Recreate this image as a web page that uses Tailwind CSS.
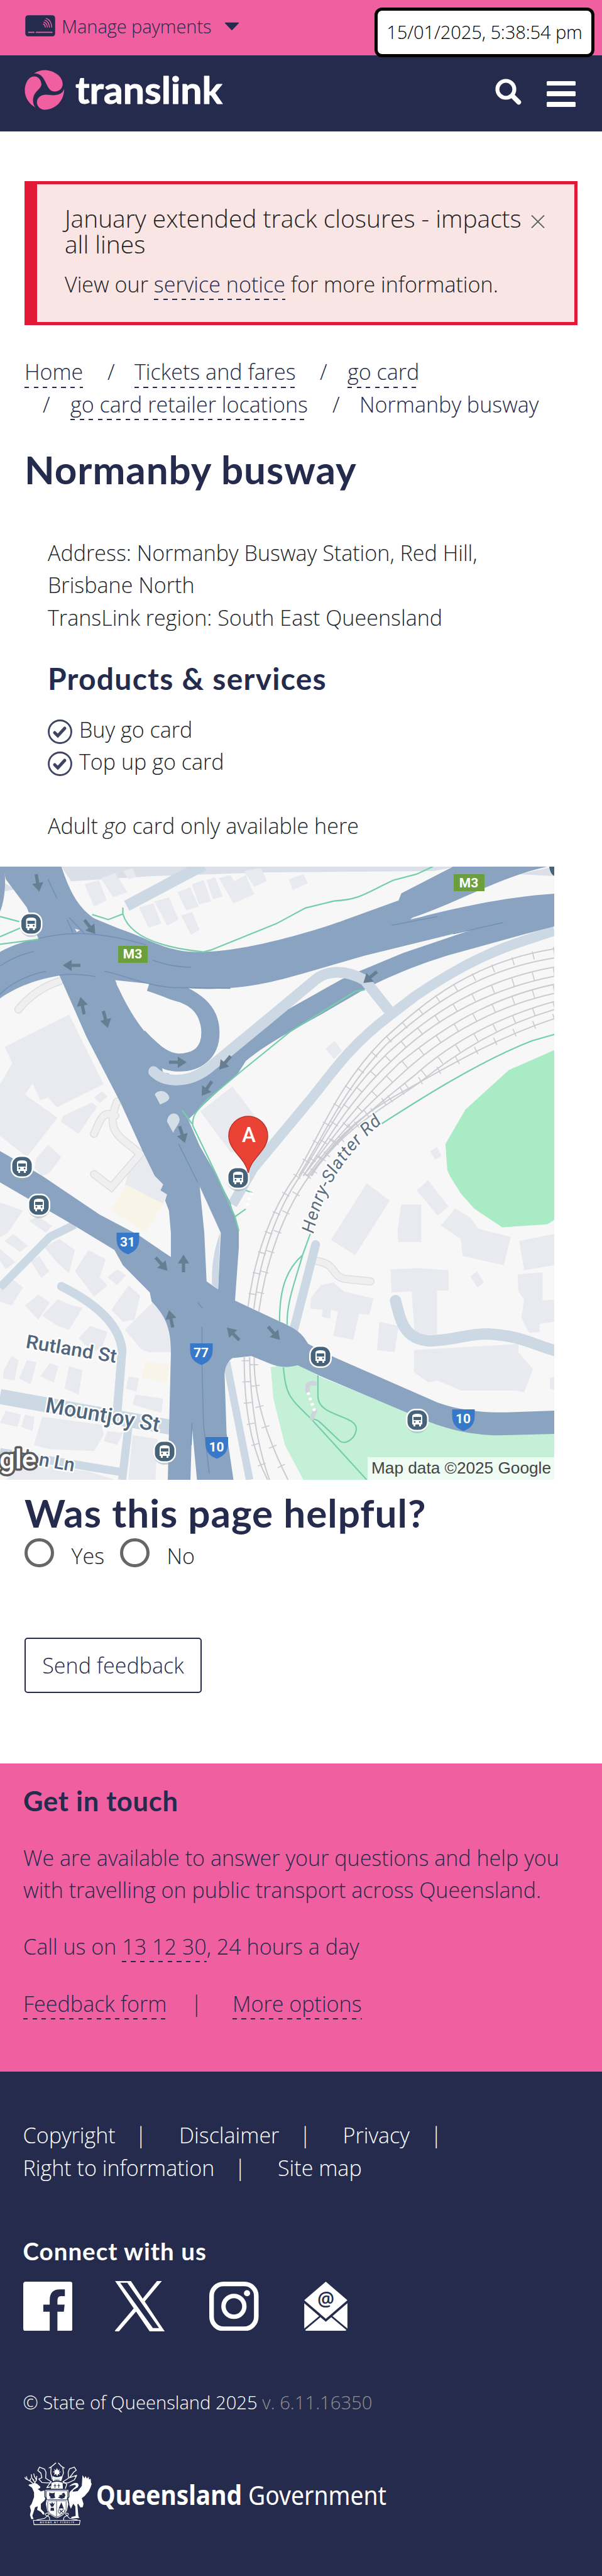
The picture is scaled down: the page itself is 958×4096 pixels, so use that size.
<!DOCTYPE html>
<html lang="en">
<head>
<meta charset="utf-8">
<title>Normanby busway | Translink</title>
<script src="https://cdn.jsdelivr.net/npm/@tailwindcss/browser@4"></script>
</head>
<body class="w-[958px] bg-white font-['Open_Sans','Noto_Sans',sans-serif] text-[34.1px] leading-[51.2px] font-light text-[#212529]">

<!-- Payments bar -->
<div class="flex h-[88px] items-start bg-[#f05fa0] pl-[40px] pr-[12px] text-[29.1px] text-[#252b4c]">
  <svg class="mt-[23.5px] h-[34px] w-[48px] shrink-0" viewBox="149 26 175 124">
    <rect x="150" y="27" width="173" height="122" rx="16" fill="#252b4c"/>
    <g fill="none" stroke="#f05fa0" stroke-width="5" stroke-linecap="round">
      <path stroke-width="6" d="M169,126 H201 M213,126 H306"/>
      <path d="M255,78 Q265,82 266,96"/><path d="M258,67 Q276,73 278,96"/><path d="M264,56 Q287,64 290,96"/><path d="M271,45 Q301,56 303,96"/>
    </g>
  </svg>
  <span class="mt-[20px] ml-[10px] leading-[44px] tracking-[-0.1px]">Manage payments</span>
  <svg class="mt-[33px] ml-[20px] h-[18px] w-[24px]" viewBox="1320 64 88 50"><path fill="#252b4c" stroke="#252b4c" stroke-width="6" stroke-linejoin="round" d="M1326,69 H1402 L1364,108Z"/></svg>
  <div class="relative z-10 mt-[12px] ml-auto flex h-[78.5px] w-[350px] shrink-0 items-center justify-center rounded-[12px] border-[5px] border-black bg-white pt-[1px] tracking-[-0.12px] whitespace-nowrap text-black">15/01/2025, 5:38:54 pm</div>
</div>

<!-- Main navigation -->
<header class="flex h-[121px] items-start bg-[#252b4c] pl-[38.5px] pr-[42px]">
  <svg class="mt-[22.5px] h-[64px] w-[64px] shrink-0" viewBox="142 348 236 236" fill="#f05fa0">
    <path d="M206,569 C165,545 144,510 144,468 C144,430 165,387 198,387 C225,387 241,410 241,435 C238,465 192,475 192,530 C192,548 198,560 206,569Z"/>
    <path d="M198,369 C220,355 240,350 262,350 C310,350 366,385 366,430 C366,458 345,475 320,475 C290,475 280,450 268,425 C252,390 235,368 198,369Z"/>
    <path d="M375,460 C375,530 325,582 260,582 C235,582 215,562 215,540 C215,510 240,494 270,494 C310,498 360,505 375,460Z"/>
  </svg>
  <svg class="mt-[22px] ml-[16px] h-[76px] w-[240px]" viewBox="0 0 240 76">
    <text x="1" y="54.5" textLength="234" lengthAdjust="spacingAndGlyphs" font-family="Lato, sans-serif" font-weight="700" font-size="58.5" fill="#fff" stroke="#fff" stroke-width="1" stroke-linejoin="round">translink</text>
  </svg>
  <svg class="mt-[37px] ml-auto h-[42px] w-[42px]" viewBox="0 0 42 42" fill="none" stroke="#fff" stroke-linecap="round">
    <circle cx="17" cy="17" r="13.5" stroke-width="6.2"/><path d="M28.5,28.5 L37.5,37.5" stroke-width="7.5"/>
  </svg>
  <div class="mt-[40.5px] ml-[40px] flex w-[46px] flex-col gap-[9px]">
    <div class="h-[7.8px] rounded-[1.5px] bg-white"></div>
    <div class="h-[7.8px] rounded-[1.5px] bg-white"></div>
    <div class="h-[7.8px] rounded-[1.5px] bg-white"></div>
  </div>
</header>

<main>
  <div class="px-[39px] pt-[78.6px]">
    <!-- Alert -->
    <div class="flex h-[229.2px] items-start border-[5px] border-l-[20px] border-[#e31836] bg-[#f9e5e3] pl-[44px] text-[#222]">
      <div class="w-[732px] pt-[33px]">
        <h2 class="text-[38.9px] leading-[41px]">January extended track closures - impacts<br>all lines</h2>
        <p class="pt-[19.4px]">View our <a class="bg-[repeating-linear-gradient(90deg,#252b4c_0_7.3px,transparent_7.3px_14.6px)] bg-[length:100%_2.4px] bg-bottom bg-no-repeat pb-[2.6px] text-[#252b4c]">service notice</a> for more information.</p>
      </div>
      <svg class="mt-[48px] ml-[9px] h-[24px] w-[24px]" viewBox="0 0 24 24" fill="none" stroke-width="2"><path stroke="#fff" d="M2,3.5 L22,23.5 M22,3.5 L2,23.5"/><path stroke="#6a6363" d="M2,1.5 L22,21.5 M22,1.5 L2,21.5"/></svg>
    </div>

    <!-- Breadcrumb -->
    <nav class="pt-[49.6px] whitespace-nowrap text-[#252b4c]">
      <div class="flex">
        <a class="w-[94px]"><span class="bg-[repeating-linear-gradient(90deg,#252b4c_0_7.3px,transparent_7.3px_14.6px)] bg-[length:100%_2.4px] bg-bottom bg-no-repeat pb-[2.6px]">Home</span></a>
        <span class="ml-[38px] w-[43px]">/</span>
        <a class="w-[257px]"><span class="bg-[repeating-linear-gradient(90deg,#252b4c_0_7.3px,transparent_7.3px_14.6px)] bg-[length:100%_2.4px] bg-bottom bg-no-repeat pb-[2.6px]">Tickets and fares</span></a>
        <span class="ml-[38px] w-[44px]">/</span>
        <a><span class="bg-[repeating-linear-gradient(90deg,#252b4c_0_7.3px,transparent_7.3px_14.6px)] bg-[length:100%_2.4px] bg-bottom bg-no-repeat pb-[2.6px]">go card</span></a>
      </div>
      <div class="flex">
        <span class="ml-[29px] w-[44px]">/</span>
        <a class="w-[379px]"><span class="bg-[repeating-linear-gradient(90deg,#252b4c_0_7.3px,transparent_7.3px_14.6px)] bg-[length:100%_2.4px] bg-bottom bg-no-repeat pb-[2.6px]">go card retailer locations</span></a>
        <span class="ml-[38px] w-[43px]">/</span>
        <span>Normanby busway</span>
      </div>
    </nav>

    <h1 class="pt-[41px] font-['Lato',sans-serif] text-[62px] leading-[72px] font-bold tracking-[0.95px] text-[#252b4c]">Normanby busway</h1>
  </div>

  <!-- Location details -->
  <section class="pt-[72.4px] pl-[76px]">
    <p>Address: Normanby Busway Station, Red Hill,<br>Brisbane North<br>TransLink region: South East Queensland</p>
    <h2 class="pt-[43.6px] font-['Lato',sans-serif] text-[48px] leading-[56px] font-bold tracking-[1.25px] text-[#252b4c]">Products &amp; services</h2>
    <ul class="pt-[27.2px]">
      <li class="flex">
        <svg class="mt-[9.5px] mr-[11px] h-[39px] w-[39px]" viewBox="0 0 39 39" fill="none" stroke="#3f4561"><circle cx="19.5" cy="19.5" r="18" stroke-width="2.8"/><path stroke-width="5" stroke-linecap="round" d="M11,21 L16,26 L27,14"/></svg>Buy go card</li>
      <li class="flex">
        <svg class="mt-[9.5px] mr-[11px] h-[39px] w-[39px]" viewBox="0 0 39 39" fill="none" stroke="#3f4561"><circle cx="19.5" cy="19.5" r="18" stroke-width="2.8"/><path stroke-width="5" stroke-linecap="round" d="M11,21 L16,26 L27,14"/></svg>Top up go card</li>
    </ul>
    <p class="pt-[51.2px]">Adult <i>go</i> card only available here</p>
  </section>

  <!-- Map -->
  <svg class="mt-[38.2px] block h-[975px] w-[882.4px] [&_path]:[vector-effect:non-scaling-stroke]" viewBox="0 38 1444 3034" preserveAspectRatio="none">
    <rect y="38" width="1444" height="3034" fill="#f7f7f7"/>
    <path fill="#dadfe8" d="M160,38 H1190 L1130,60 L700,66 L400,85 L185,110Z M1350,75 L1444,85 V38Z M12,120 L40,150 L12,160Z"/>

    <!-- parks -->
    <path fill="#a8ebc4" d="M1444,945 L1325,1045 L1212,1240 L1160,1410 L1165,1540 L1172,1570 L1200,1655 L1235,1730 L1308,1823 L1425,1808 L1444,1785Z"/>
    <path fill="#c4f0d7" d="M705,2515 L712,2670 L742,2900 L790,3072 H1444 V2840 L1300,2850 L1160,2800 L1040,2720 L830,2560 L775,2490Z"/>

    <!-- buildings -->
    <g fill="#e8eaef">
      <path d="M180,770 L270,1115 L148,1230 L125,1180 L105,1195 L85,1110 L65,1165 L150,1280 L70,1475 L0,1370 V1115 L32,1010 L12,930Z"/>
      <path d="M220,125 L258,105 L278,205 L245,235Z M262,95 L300,70 L332,165 L295,190Z M362,240 L400,220 L420,320 L387,340Z M402,210 L440,190 L465,300 L435,330Z M462,165 L495,140 L518,235 L485,255Z M500,125 L530,105 L550,210 L518,225Z M538,105 L560,90 L580,185 L555,200Z M570,95 L600,80 L610,110 L640,80 L662,175 L608,220Z M635,60 L680,45 L695,110 L662,138Z M472,280 L500,262 L520,350 L497,375Z M752,100 L790,75 L802,120 L762,155Z M320,60 L345,45 L355,90 L335,100Z"/>
      <path d="M522,1250 L605,1125 L665,1275 L640,1460 L600,1450Z M848,940 L872,900 L890,950 L870,990Z M1120,1445 L1138,1425 L1150,1470 L1133,1488Z"/>
      <path d="M165,1270 L240,1205 L252,1225 L205,1360 L158,1300Z M245,1180 L265,1150 L280,1175 L260,1208Z M95,1480 L125,1415 L160,1475 L130,1550 L110,1568 L90,1530Z M225,1240 L240,1205 L250,1240 L235,1270Z"/>
      <path d="M345,1470 L375,1440 L403,1568 L425,1610 L418,1640 L435,1660 L425,1705 L325,1615Z"/>
      <path d="M0,1700 L60,1740 L20,1850 L0,1870Z M75,1790 L100,1770 L135,1815 L120,1850Z M12,1890 L35,1855 L72,1915 L52,1945Z M0,1930 L40,1995 L15,2030 L0,1990Z M115,1920 L155,1880 L195,1935 L180,2050 L150,2000Z M80,1990 L102,1965 L128,2040 L108,2075Z M195,2040 L230,1935 L275,1980 L260,2070 L280,2110 L245,2165Z M280,2070 L305,2030 L328,2060 L305,2110Z M290,2230 L335,2110 L365,2160 L350,2280 L320,2290Z M0,2120 L30,2075 L60,2120 L30,2210 L0,2190Z M65,2210 L100,2155 L130,2195 L100,2280Z M110,2260 L150,2180 L190,2210 L215,2220 L180,2330 L150,2310Z M205,2370 L235,2310 L280,2340 L265,2420 L240,2440Z M325,2330 L400,2190 L435,2260 L445,2440 L390,2440 L370,2430Z"/>
      <path d="M10,2530 L30,2460 L48,2480 L38,2580 L8,2570Z M50,2570 L70,2480 L95,2490 L80,2600Z M105,2560 L130,2495 L152,2510 L140,2590Z M168,2620 L180,2510 L215,2530 L205,2650Z M328,2620 L335,2560 L362,2570 L355,2635Z M345,2700 L352,2650 L425,2670 L420,2740Z M0,2790 L15,2730 L55,2750 L45,2810Z M55,2810 L65,2750 L90,2760 L85,2830Z M88,2900 L110,2760 L265,2800 L270,2850 L245,2930 L130,2920Z M270,2880 L280,2830 L320,2840 L305,2900Z M335,3060 L345,2850 L410,2870 L405,3072 H335Z M15,3072 L60,2990 L230,3030 L300,3072Z"/>
      <path d="M955,1605 L1015,1690 L925,1960 L862,1885Z M1085,1640 L1115,1590 L1168,1720 L1140,1765Z M1045,1710 H1097 V1895 H1037 L1035,1840Z M1148,1815 L1185,1730 L1225,1775 L1245,1830 L1330,1870 L1312,2010 L1205,1965 L1200,1880Z M1352,1890 L1444,1855 V2010 L1365,2035Z M1017,2030 L1090,2025 L1168,2035 V2135 H1138 V2355 H1080 L1072,2140 L1020,2145Z M1225,2065 L1243,2040 L1260,2095 L1243,2120Z M1348,2055 L1413,2045 V2185 L1444,2180 V2290 L1405,2300 V2340 L1378,2345 L1358,2270 L1365,2180 L1350,2140Z M810,2170 L835,2110 L868,2095 L895,2140 L973,2175 L962,2255 L935,2250 L920,2380 L868,2360 L880,2240 L862,2230 L860,2275 L838,2265 L840,2230 L808,2225Z M982,2430 L988,2290 L1038,2310 L1028,2440Z M1078,2430 L1350,2400 V2440 L1388,2525 L1365,2640 L1345,2630 L1200,2630 L1140,2580 L1115,2590 L1078,2540Z M1432,2570 L1444,2560 V2630 L1432,2620Z"/>
    </g>
    <path fill="#f9f4e8" d="M330,1612 L425,1708 L378,1845 L288,1738Z M378,2488 L440,2502 L434,2590 L368,2566Z"/>

    <!-- footpaths -->
    <g fill="none" stroke-linecap="round">
      <g stroke="#dcdfe2" stroke-width="13"><path d="M155,605 C110,630 70,690 48,745"/><path d="M305,1200 C270,1360 320,1380 365,1460 L290,1625 L245,1560 M300,1270 C265,1240 260,1300 245,1360"/><path d="M825,1990 C880,2000 860,2080 910,2080 L965,2090"/></g>
      <g stroke="#efefef" stroke-width="10"><path d="M155,605 C110,630 70,690 48,745"/><path d="M305,1200 C270,1360 320,1380 365,1460 L290,1625 L245,1560 M300,1270 C265,1240 260,1300 245,1360"/><path d="M825,1990 C880,2000 860,2080 910,2080 L965,2090"/></g>
    </g>

    <!-- railway -->
    <g fill="none" stroke="#c9cbd0" stroke-width="2">
      <path d="M1444,445 C1230,510 1110,700 1000,890 C880,1120 840,1340 770,1568"/>
      <path d="M1444,490 C1240,550 1110,740 1005,920 C890,1150 850,1350 778,1568"/>
      <path d="M1444,535 C1250,600 1120,770 1010,960 C890,1180 850,1370 782,1568"/>
      <path d="M1444,580 C1260,650 1130,800 1030,980 C910,1190 860,1370 790,1568"/>
      <path d="M1444,620 C1270,690 1150,840 1040,1010 C930,1210 870,1370 790,1568"/>
      <path d="M1444,665 C1290,730 1160,870 1060,1040 C950,1230 880,1360 800,1568"/>
      <path d="M1444,705 C1300,780 1180,900 1080,1070 C970,1240 890,1350 805,1568"/>
      <path d="M1444,745 C1310,820 1200,940 1090,1110 C990,1240 890,1340 810,1568"/>
      <path d="M1444,790 C1300,880 1180,1010 1060,1140 C960,1240 870,1370 812,1568"/>
      <path d="M770,1568 C700,1750 660,2000 646,2215 M782,1568 C715,1750 675,2000 661,2225 M806,1568 C735,1750 692,2000 674,2240"/>
      <path d="M636,2465 C636,2700 650,2900 697,3072 M650,2465 C652,2700 672,2920 702,3072 M662,2465 C660,2700 710,2920 750,3072"/>
    </g>
    <g fill="none" stroke="#c9cbd0" stroke-width="13" stroke-dasharray="1.6 32">
      <path d="M1444,455 C1235,525 1115,715 1005,905 C885,1135 845,1350 774,1568"/>
      <path d="M1444,558 C1255,625 1125,785 1020,970 C900,1185 855,1370 786,1568"/>
      <path d="M1444,642 C1280,710 1155,855 1050,1025 C940,1220 875,1365 795,1568"/>
      <path d="M1444,725 C1305,800 1190,920 1085,1090 C980,1240 890,1345 808,1568"/>
      <path d="M1444,785 C1300,875 1180,1005 1060,1135 C960,1235 870,1365 812,1568"/>
      <path d="M774,1568 C707,1750 667,2000 653,2220"/><path d="M802,1568 C730,1750 687,2000 669,2240"/>
      <path d="M640,2480 C640,2700 655,2900 699,3072"/><path d="M662,2500 C660,2700 710,2920 750,3072"/>
    </g>

    <!-- minor roads under the highways -->
    <g fill="none" stroke="#ccd8e4">
      <path stroke-width="18" d="M530,30 L330,232"/>
      <path stroke-width="16" d="M1444,355 L1380,395 C1250,470 1150,590 1080,680 L1012,780 C900,940 850,1100 800,1210 L660,1530 L605,1710"/>
      <path stroke-width="14" stroke-linecap="round" d="M822,1908 L765,2330"/>
      <path stroke-width="18" stroke-linecap="round" d="M1030,2185 C1045,2300 1055,2378 1120,2385 C1190,2380 1210,2350 1270,2350 C1360,2360 1385,2400 1444,2432"/>
      <path stroke-width="13" d="M195,1810 L130,1870 L0,2120"/>
      <path stroke-width="14" stroke-linecap="round" d="M160,2115 C240,2190 310,2290 318,2430 L305,2740"/>
      <path stroke-width="24" d="M0,2660 L445,2812"/>
      <path stroke-width="13" d="M335,2800 L318,3072 M0,2935 L320,3035"/>
      <path stroke-width="12" d="M590,2490 L650,3072"/>
      <path stroke-width="12" d="M580,1820 L556,2110"/>
    </g>

    <!-- highways -->
    <g fill="#8aa3c0">
      <path d="M0,460 C40,420 70,405 103,393 L240,290 L310,345 C400,400 430,465 530,460 C650,455 830,350 900,300 L1038,205 L1045,170 L1180,38 H1425 C1300,90 1200,210 1075,290 L1068,300 C1200,235 1320,188 1444,172 V333 L1240,343 L950,478 L820,550 C720,605 640,650 510,642 L300,600 L155,577 C80,600 30,650 0,690Z"/>
      <path d="M1444,333 L1370,370 L1180,470 C1090,520 1030,570 980,615 L940,655 L840,765 C760,850 690,920 640,1000 L620,1060 L545,1190 L490,1290 L440,1270 L415,1105 C520,1100 560,1040 640,900 L730,765 L890,595 L930,560 L1050,465 L1240,343 L1400,200Z"/>
      <path d="M8,38 H160 C180,150 200,240 250,300 L330,360 L300,600 C330,740 370,850 400,900 L440,960 L440,1110 L488,1280 L520,1420 L565,1568 L600,1700 L622,1840 V1920 L612,2185 L730,2290 C780,2330 790,2360 803,2400 L870,2465 L1140,2690 C1200,2730 1260,2740 1320,2738 L1444,2730 V2845 L1300,2852 C1200,2850 1130,2800 1060,2740 L830,2555 L775,2505 C745,2520 725,2515 700,2495 L655,2460 L605,2470 C585,2500 585,2540 585,2560 L590,2840 L608,3072 H437 L445,2450 C445,2330 435,2270 395,2190 L390,2145 L320,2010 L298,1935 L190,1810 L0,1600 V1445 L50,1500 L110,1568 L260,1760 L360,1860 L445,1970 V1850 L440,1740 L430,1690 L435,1660 L418,1640 L425,1610 L403,1568 L370,1440 L315,1210 L225,880 L195,750 L155,577 L100,395 L70,240 L15,100Z"/>
      <path d="M0,38 H10 C18,120 10,220 0,260Z"/>
      <path fill="none" stroke="#8aa3c0" stroke-width="29" d="M390,610 C520,690 548,760 548,860 C548,960 510,1008 465,1008 C430,1008 400,960 360,880"/>
    </g>
    <g fill="#f7f7f7">
      <path d="M303,618 L470,710 C510,740 522,790 523,850 C526,920 510,960 470,960 C440,955 400,900 380,850 C350,780 325,700 303,618Z"/>
      <path d="M422,1035 C450,1060 490,1055 520,1035 L500,1075 L425,1058Z"/>
      <path d="M520,1620 L575,1850 L568,2130 L538,2090 L532,1850Z"/>
      <path d="M500,2810 L513,3072 H496Z"/>
      <path d="M1068,298 L1130,262 L1100,285Z M1170,370 L1240,343 L1225,352Z M195,345 L208,352 L200,362Z"/>
    </g>
    <path fill="#ccd8e4" d="M573,1850 L568,2130 L552,2105 C550,2000 560,1920 573,1850Z"/>
    <g fill="none" stroke="#6f90b4" stroke-width="1.5">
      <path d="M0,530 C30,490 60,470 88,458 M103,393 C180,355 260,360 380,425 M398,500 C430,525 460,535 498,536 M0,670 C30,610 80,570 120,555 M155,575 C190,565 220,572 248,582 M272,555 C330,580 400,640 470,637 L600,640 M1020,328 L1140,285 M1180,370 L1310,315 M125,100 L148,195 M175,300 L190,365 M180,290 L218,365"/>
      <path d="M526,2315 V2500 L530,2800 L545,3040 M515,2195 L527,2222 M500,2790 L498,2900 M465,1410 L515,1600"/>
    </g>

    <!-- busway ramp and islands -->
    <path fill="none" stroke="#ccd8e4" stroke-width="17" stroke-linecap="round" stroke-linejoin="round" d="M400,1052 C430,1110 490,1110 540,1040 L700,790 L820,600 C850,550 900,545 950,600 L1015,755"/>
    <path fill="#d3dee7" d="M403,1165 C410,1140 435,1140 441,1180 C441,1195 430,1205 417,1215Z M435,1300 C436,1250 465,1245 468,1290 C466,1315 458,1325 451,1355Z"/>

    <!-- cycle paths -->
    <g fill="none" stroke="#74ceab" stroke-width="2.2">
      <path d="M240,275 L282,300 L320,272 V240 M320,272 C335,370 400,435 530,460 L550,450 L720,320 L795,243 L870,208 C940,200 950,170 1025,105 L1085,75 L1127,38"/>
      <path d="M950,648 L925,655 L755,855 L635,1040 L540,1190 C510,1250 500,1270 502,1320 L565,1568 L612,1770 L622,1840 M475,1245 L500,1310 M612,1770 L640,1732 M640,1640 L658,1652"/>
      <path d="M1444,868 L1385,900 C1250,1000 1100,1180 990,1315"/>
      <path d="M808,1855 L788,1960 C740,2040 728,2150 728,2290 M788,1960 C770,2080 745,2200 748,2305 M738,2515 C745,2650 750,2660 810,2770 L955,3072 M828,2555 V2660 C828,2760 928,2750 928,2820 C925,2870 900,2900 885,2880 L835,2790 C825,2770 815,2770 810,2775"/>
      <path d="M0,285 L50,310 M0,385 L55,340 M0,422 L100,398"/>
    </g>
    <path fill="none" stroke="#cdd5da" stroke-width="7" stroke-linecap="round" d="M820,2595 C795,2590 800,2610 802,2640 M820,2730 L812,2768"/>
    <path fill="none" stroke="#fff" stroke-width="5" stroke-dasharray="4 5" d="M802,2640 L820,2735 M655,1650 L640,1730"/>

    <!-- labels and markers, in screen pixels -->
    <g transform="translate(0 38) scale(1.6365 3.1118)">
      <defs>
        <path id="arrow" fill="#677d92" d="M-14,-2.6 H0 V-9 L14,0 L0,9 V2.6 H-14Z"/>
        <g id="bus"><ellipse cy="3" rx="18" ry="18" fill="#9aa6b2" opacity=".5"/><rect x="-18" y="-18" width="36" height="36" rx="15" fill="#fff"/><rect x="-15.5" y="-15.5" width="31" height="31" rx="12.5" fill="#46637a"/><path fill="#fff" fill-rule="evenodd" d="M-8,-6 Q-8,-10 0,-10 Q8,-10 8,-6 V7 H6 V10 H3 V7 H-3 V10 H-6 V7 H-8Z M-6,-5 H6 V0 H-6Z M-5.5,3 a1.4,1.4 0 1 0 2.8,0 a1.4,1.4 0 1 0 -2.8,0Z M2.7,3 a1.4,1.4 0 1 0 2.8,0 a1.4,1.4 0 1 0 -2.8,0Z"/></g>
        <path id="shield" fill="#3878c8" d="M-18,-17 H18 V-8 C18,4 14,12 0,17.5 C-14,12 -18,4 -18,-8Z"/>
        <path id="slatter" d="M499,584 C512,520 542,462 612,404"/>
      </defs>
      <use href="#arrow" transform="translate(60 26) rotate(80)"/><use href="#arrow" transform="translate(143 96) rotate(52)"/><use href="#arrow" transform="translate(114 157) rotate(180)"/><use href="#arrow" transform="translate(131 221) rotate(-102)"/><use href="#arrow" transform="translate(168 243) rotate(75)"/><use href="#arrow" transform="translate(283 311)"/><use href="#arrow" transform="translate(358 312) rotate(130)"/><use href="#arrow" transform="translate(589 176) rotate(140)"/><use href="#arrow" transform="translate(329 353) rotate(125)"/><use href="#arrow" transform="translate(290 426) rotate(72)"/><use href="#arrow" transform="translate(257 632) rotate(48)"/><use href="#arrow" transform="translate(292 631) rotate(-90)"/><use href="#arrow" transform="translate(272 719) rotate(-102)"/><use href="#arrow" transform="translate(371 743) rotate(-135)"/><use href="#arrow" transform="translate(436 742) rotate(48)"/>

      <g font-family="Roboto, 'Noto Sans', sans-serif">
        <text font-size="28" font-weight="400" fill="#5d6e80" stroke="#fff" stroke-width="4" paint-order="stroke" stroke-linejoin="round" font-style="italic"><textPath href="#slatter" textLength="212">Henry-Slatter Rd</textPath></text>
        <g font-weight="500" fill="#4f667c" stroke="#fff" stroke-width="5" paint-order="stroke" stroke-linejoin="round">
          <text transform="translate(40 765) rotate(9.5)" font-size="30" textLength="146" lengthAdjust="spacingAndGlyphs">Rutland St</text>
          <text transform="translate(71 867) rotate(10)" font-size="34" textLength="184" lengthAdjust="spacingAndGlyphs">Mountjoy St</text>
          <text transform="translate(117 962) rotate(10)" font-size="30" text-anchor="end">rdon Ln</text>
        </g>
        <text x="-1" y="957" font-size="42" font-weight="500" fill="#fff" stroke="#5c5c5c" stroke-width="7" paint-order="stroke" stroke-linejoin="round" textLength="59" lengthAdjust="spacingAndGlyphs">gle</text>
        <g font-weight="700" font-size="21" fill="#fff" text-anchor="middle">
          <rect x="722" y="12" width="49" height="27" fill="#6b9f3e"/><text x="746" y="33">M3</text>
          <rect x="188" y="126" width="47" height="27" fill="#6b9f3e"/><text x="211" y="146.5">M3</text>
          <use href="#shield" x="203.5" y="599"/><text x="203" y="604">31</text>
          <use href="#shield" x="320.5" y="775"/><text x="320" y="780">77</text>
          <use href="#shield" x="345" y="924"/><text x="344.5" y="930">10</text>
          <use href="#shield" x="737.5" y="880"/><text x="737" y="885">10</text>
        </g>
      </g>
      <use href="#bus" x="49.5" y="91"/><use href="#bus" x="35" y="477"/><use href="#bus" x="379" y="495"/><use href="#bus" x="62" y="538"/><use href="#bus" x="510" y="779"/><use href="#bus" x="664" y="880"/><use href="#bus" x="262" y="930"/>
      <path d="M874,0 C875,8 878,13 882.4,15 V0Z" fill="#46637a"/>

      <!-- pin -->
      <path fill="#ea4335" stroke="#b93429" stroke-width="1.5" d="M395,487 C391,463 364,452 364,428 A31,31 0 0 1 426,428 C426,452 399,463 395,487Z"/>
      <text x="396" y="438" font-family="Roboto, sans-serif" font-weight="500" font-size="33" fill="#fff" text-anchor="middle">A</text>

      <rect x="585" y="939" width="298" height="36" fill="#fff" opacity=".7"/>
      <text x="591" y="965.5" font-family="'Liberation Sans', Arial, sans-serif" font-weight="400" font-size="26" fill="#444" textLength="286" lengthAdjust="spacingAndGlyphs">Map data ©2025 Google</text>
    </g>
  </svg>

  <!-- Feedback -->
  <section class="px-[39px] pt-[16.4px]">
    <h2 class="font-['Lato',sans-serif] text-[62px] leading-[72px] font-bold tracking-[1px] text-[#252b4c]">Was this page helpful?</h2>
    <div class="flex items-start pt-[5px]">
      <span class="size-[46.5px] rounded-full border-[5px] border-[#666]"></span><span class="mt-[3.5px] ml-[28px] w-[77.5px]">Yes</span>
      <span class="size-[46.5px] rounded-full border-[5px] border-[#666]"></span><span class="mt-[3.5px] ml-[28px]">No</span>
    </div>
    <button class="mt-[103px] flex h-[88.5px] w-[282px] items-center justify-center rounded-[5px] border-[2.5px] border-[#252b4c] pt-px font-light text-[#252b4c]">Send feedback</button>
  </section>
</main>

<!-- Contact -->
<section class="mt-[111.5px] h-[490px] bg-[#f05fa0] px-[37px] pt-[34px] text-[#252b4c]">
  <h2 class="font-['Lato',sans-serif] text-[43.5px] leading-[51px] font-bold tracking-[0.7px]">Get in touch</h2>
  <p class="pt-[40.3px] whitespace-nowrap">We are available to answer your questions and help you<br>with travelling on public transport across Queensland.</p>
  <p class="pt-[38.6px]">Call us on <a class="bg-[repeating-linear-gradient(90deg,#252b4c_0_7.3px,transparent_7.3px_14.6px)] bg-[length:100%_2.4px] bg-bottom bg-no-repeat pb-[2.6px]">13 12 30</a>, 24 hours a day</p>
  <p class="flex pt-[39.4px]">
    <a class="w-[229px]"><span class="bg-[repeating-linear-gradient(90deg,#252b4c_0_7.3px,transparent_7.3px_14.6px)] bg-[length:100%_2.4px] bg-bottom bg-no-repeat pb-[2.6px]">Feedback form</span></a>
    <span class="ml-[37.5px] w-[66.5px]">|</span>
    <a><span class="bg-[repeating-linear-gradient(90deg,#252b4c_0_7.3px,transparent_7.3px_14.6px)] bg-[length:100%_2.4px] bg-bottom bg-no-repeat pb-[2.6px]">More options</span></a>
  </p>
</section>

<!-- Footer -->
<footer class="h-[802.3px] bg-[#252b4c] px-[36.5px] pt-[76.8px] text-white">
  <div class="whitespace-nowrap">
    <div class="flex"><span class="w-[147px]">Copyright</span><span class="ml-[31.5px] w-[70px]">|</span><span class="w-[160px]">Disclaimer</span><span class="ml-[31.5px] w-[69px]">|</span><span class="w-[108px]">Privacy</span><span class="ml-[31.5px]">|</span></div>
    <div class="flex"><span class="w-[305px]">Right to information</span><span class="ml-[31.5px] w-[69px]">|</span><span>Site map</span></div>
  </div>
  <h2 class="pt-[84.4px] font-['Lato',sans-serif] text-[38.5px] leading-[45px] font-bold tracking-[1px]">Connect with us</h2>
  <div class="flex items-center pt-[24.5px]">
    <svg class="h-[78.5px] w-[78.5px]" viewBox="0 0 96 96"><path fill="#fff" d="M5,0 H91 Q96,0 96,5 V91 Q96,96 91,96 H66.5 V58.5 H79 L80.500,44.5 H66.5 V37 Q66.5,28 73,28 H81 V15 H71 Q51.5,15 51.5,36 V44.5 H39 V58.5 H51.5 V96 H5 Q0,96 0,91 V5 Q0,0 5,0Z"/></svg>
    <svg class="ml-[68px] h-[80.5px] w-[80px]" viewBox="0 0 98 99"><path fill="#fff" fill-rule="evenodd" d="M0,0 H31 L54,34.5 L82,0 H91.5 L58,40 L97.5,99 H68 L41,59.5 L7,99 H0 V96.5 L36.5,53.5Z M10,3.5 H24 L86,92 H74Z"/></svg>
    <svg class="ml-[70px] h-[78.5px] w-[78.5px]" viewBox="0 0 96 96" fill="none" stroke="#fff"><rect x="4.5" y="4.5" width="87" height="87" rx="23" stroke-width="9"/><circle cx="48" cy="48" r="20.3" stroke-width="8.6"/><circle cx="73.5" cy="22.5" r="6" fill="#fff" stroke="none"/></svg>
    <svg class="ml-[72px] h-[78.5px] w-[69px]" viewBox="0 0 84 96"><g fill="#fff"><path d="M42,0 L84,36 L42,72 L0,36Z"/><path d="M0,42 L29,67 L0,91Z"/><path d="M84,42 L55,67 L84,91Z"/><path d="M31.5,69 L42,78 L52.5,69 L82,94 Q80,96 79,96 H5 Q3,96 2,94Z"/></g><text x="42" y="47" text-anchor="middle" font-family="'Open Sans', sans-serif" font-weight="600" font-size="37" fill="#252b4c">@</text></svg>
  </div>
  <p class="pt-[91px] text-[29.2px] leading-[44px]">© State of Queensland 2025 <span class="text-[#8f9090]">v. 6.11.16350</span></p>

  <!-- Coat of arms and wordmark -->
  <div class="flex pt-[73px]">
    <svg class="ml-[2px] h-[101px] w-[108px]" viewBox="144 142 398 370" fill="#fff" stroke="none">
      <!-- mantling and crest -->
      <g fill="none" stroke="#fff" stroke-width="5" stroke-linejoin="round" stroke-linecap="round">
        <path d="M327,146 L305,165 L288,175 M343,146 L360,165 L378,175 M300,168 L298,205 L306,235 M368,168 L372,205 L362,235"/>
        <path d="M222,190 L232,170 L262,182 L270,200 L268,235 L300,255 M222,190 L240,205 L246,232 L228,240 L246,260 L275,262 L300,262"/>
        <path d="M448,188 L436,170 L408,180 L400,200 L402,235 L370,255 M448,188 L432,200 L408,232 M408,232 L450,218 L436,245 L400,262 L370,262"/>
        <path d="M300,255 L275,290 L300,285 M370,255 L392,270 L382,300 M305,240 H363"/>
      </g>
      <path d="M334,175 L341,190 L350,182 L346,196 L360,198 L346,203 L352,215 L341,210 L336,224 L329,210 L317,216 L322,203 L308,198 L322,194 L317,181 L328,189Z"/>
      <path fill-rule="evenodd" d="M308,222 Q334,236 362,222 L360,252 Q334,242 310,252Z M316,236 Q334,242 354,236 V241 Q334,247 316,241Z"/>
      <path d="M303,262 Q334,248 367,262 L370,302 H298Z"/>
      <path fill="none" stroke="#252b4c" stroke-width="3.5" d="M323,268 V292 M315,278 H331 M345,268 V292 M337,278 H353"/>
      <!-- deer -->
      <path d="M190,268 L170,272 L168,277 L188,290 L200,318 L200,345 L186,385 L175,400 L182,425 L176,450 L184,474 H197 L190,455 L206,405 L222,400 L218,420 L240,432 L252,448 L262,448 L258,435 L240,415 L240,385 L262,365 L268,345 L266,305 L240,312 L222,298 L236,292 V284 L218,268 L204,262Z"/>
      <path fill="none" stroke="#fff" stroke-width="5" d="M196,268 L178,252 L150,238 L146,228 M160,243 L155,224 M176,250 L180,236 M184,212 L186,232 L206,262 M204,262 L214,246 L202,224 L198,208 M214,246 L216,222 M200,246 L188,238"/>
      <!-- brolga -->
      <path d="M404,284 Q430,258 455,264 Q466,274 456,288 L430,304 L426,314 L456,310 L480,280 L484,216 L496,236 L502,222 L510,238 L520,226 L522,242 L532,238 L534,262 L538,268 L530,292 L520,312 L496,340 L480,352 L490,384 L486,404 L472,406 L458,384 L454,390 L460,458 L466,468 L420,470 L418,462 L444,456 L442,400 L430,384 L416,414 L402,380 L400,330 L412,312 L446,282 L440,274 Q424,276 404,284Z"/>
      <!-- shield -->
      <path stroke="#252b4c" stroke-width="6" d="M264,300 H404 V345 L396,352 L404,385 L396,425 Q380,455 334,472 Q288,455 274,425 L266,385 L272,352 L264,345Z"/>
      <path fill="none" stroke="#252b4c" stroke-width="3" d="M272,308 H396 V360 H272Z M278,367 H392 M332,367 V466 M280,372 V420 Q290,448 333,463 Q376,448 388,420 V372"/>
      <g fill="#252b4c">
        <path d="M290,318 L298,322 H314 L322,318 L320,336 L324,350 L308,354 L290,352 L298,346 L288,336Z M340,348 L352,340 L344,336 L362,332 L370,338 L362,326 L376,320 L384,334 L378,350 L362,356Z"/>
        <path d="M290,378 L300,402 H312 L322,378 L312,386 L306,374 L300,386Z M298,408 H316 L318,426 H296Z M360,376 L374,412 H344 L354,390Z"/>
      </g>
      <circle cx="360" cy="428" r="18" stroke="#252b4c" stroke-width="3"/>
      <path fill="none" stroke="#252b4c" stroke-width="4.5" d="M350,420 L370,438 M370,420 L350,438"/>
      <!-- scroll -->
      <path fill="none" stroke="#fff" stroke-width="4" d="M196,482 H470 L466,507 H200Z M214,480 L262,470 L290,445 Q285,435 268,442 Q262,452 278,456 Q296,462 290,480 M456,480 L408,470 L384,445 Q390,435 400,442 Q404,452 390,456 Q370,462 374,480"/>
      <text x="334" y="500" text-anchor="middle" textLength="200" font-family="'Open Sans', sans-serif" font-weight="600" font-size="15">AUDAX AT FIDELIS</text>
    </svg>
    <svg class="ml-[6px] h-[101px] w-[480px]" viewBox="0 0 480 101" fill="#fff" font-family="'Noto Sans', 'Open Sans', sans-serif">
      <text x="0" y="68" font-size="42.5" font-weight="700" textLength="232" lengthAdjust="spacingAndGlyphs">Queensland</text>
      <text x="242" y="68" font-size="41.5" font-weight="400" textLength="220" lengthAdjust="spacingAndGlyphs">Government</text>
    </svg>
  </div>
</footer>
</body>
</html>
